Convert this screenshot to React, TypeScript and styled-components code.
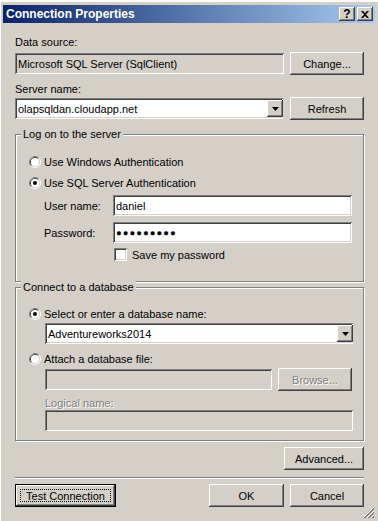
import styled, { createGlobalStyle } from 'styled-components';

const Global = createGlobalStyle`
  html, body {
    margin: 0;
    padding: 0;
    background: #d4d0c8;
  }
`;

const raised = `
  box-shadow: inset -1px -1px 0 #404040, inset 1px 1px 0 #fff,
    inset -2px -2px 0 #808080, inset 2px 2px 0 #d4d0c8;
`;

const sunken = `
  box-shadow: inset 1px 1px 0 #808080, inset -1px -1px 0 #fff,
    inset 2px 2px 0 #404040, inset -2px -2px 0 #d4d0c8;
`;

const Radio = ({ checked }: { checked?: boolean }) => (
  <RadioImage viewBox="0 0 12 12">
    <path d="M2.11 9.89A5.5 5.5 0 0 1 9.89 2.11" stroke="#808080" fill="none" />
    <path d="M9.89 2.11A5.5 5.5 0 0 1 2.11 9.89" stroke="#fff" fill="none" />
    <path d="M2.82 9.18A4.5 4.5 0 0 1 9.18 2.82" stroke="#404040" fill="none" />
    <path d="M9.18 2.82A4.5 4.5 0 0 1 2.82 9.18" stroke="#d4d0c8" fill="none" />
    <circle cx="6" cy="6" r="4" fill="#fff" />
    {checked && <circle cx="6" cy="6" r="2" fill="#000" />}
  </RadioImage>
);

const DropArrow = () => (
  <ArrowButton>
    <svg width="7" height="4" viewBox="0 0 7 4">
      <polygon points="0,0 7,0 3.5,4" fill="#000" />
    </svg>
  </ArrowButton>
);

const App = (): JSX.Element => {
  return (
    <Window>
      <Global />
      <TitleBar>
        <Title>Connection Properties</Title>
        <CaptionButton>?</CaptionButton>
        <CaptionButton $gap>
          <svg width="8" height="7" viewBox="0 0 8 7">
            <path d="M0 0h2l2 2 2-2h2L5 3.5 8 7H6L4 5 2 7H0l3-3.5z" fill="#000" />
          </svg>
        </CaptionButton>
      </TitleBar>

      <Content>
        <Label $top={13}>Data source:</Label>
        <Row $top={3}>
          <Field $grey $width={269}>Microsoft SQL Server (SqlClient)</Field>
          <Button $width={74}>Change...</Button>
        </Row>

        <Label $top={8}>Server name:</Label>
        <Row $top={1}>
          <Field $width={268}>
            <FieldText>olapsqldan.cloudapp.net</FieldText>
            <DropArrow />
          </Field>
          <Button $width={74}>Refresh</Button>
        </Row>

        <Group $top={14} $bottom={20}>
          <Legend>Log on to the server</Legend>
          <Choice $top={14}>
            <Radio />
            Use Windows Authentication
          </Choice>
          <Choice $top={8}>
            <Radio checked />
            Use SQL Server Authentication
          </Choice>
          <LoginRow $top={6}>
            <LoginLabel>User name:</LoginLabel>
            <Field $grow>daniel</Field>
          </LoginRow>
          <LoginRow $top={6}>
            <LoginLabel>Password:</LoginLabel>
            <Field $grow>
              <Dots>●●●●●●●●●</Dots>
            </Field>
          </LoginRow>
          <CheckRow>
            <CheckBox />
            Save my password
          </CheckRow>
        </Group>

        <Group $top={5} $bottom={9}>
          <Legend>Connect to a database</Legend>
          <Choice $top={13}>
            <Radio checked />
            Select or enter a database name:
          </Choice>
          <Indent>
            <Field $top={3} $width={308}>
              <FieldText>Adventureworks2014</FieldText>
              <DropArrow />
            </Field>
          </Indent>
          <Choice $top={8}>
            <Radio />
            Attach a database file:
          </Choice>
          <Indent>
            <Row $top={3}>
              <Field $grey $width={227} />
              <Button $width={74} $disabled>Browse...</Button>
            </Row>
            <Label $top={6} $disabled>Logical name:</Label>
            <Field $grey $width={308} />
          </Indent>
        </Group>

        <Button $width={80} $top={6} $right>
          Advanced...
        </Button>
        <Separator />

        <Footer>
          <DefaultButton>
            <FocusRect>Test Connection</FocusRect>
          </DefaultButton>
          <Spacer />
          <Button $width={75}>OK</Button>
          <Button $width={74}>Cancel</Button>
        </Footer>
      </Content>

      <Grip width="13" height="13" viewBox="0 0 13 13">
        <path d="M12 1L1 12M12 5L5 12M12 9L9 12" stroke="#fff" />
        <path d="M12 2L2 12M12 3L3 12M12 6L6 12M12 7L7 12M12 10L10 12M12 11L11 12" stroke="#808080" />
      </Grip>
    </Window>
  );
};

export default App;

const Window = styled.div`
  position: relative;
  box-sizing: border-box;
  width: 378px;
  height: 521px;
  overflow: hidden;
  background: #d4d0c8;
  border-top: 2px solid #fff;
  border-left: 1px solid #fff;
  padding: 3px 3px 0 2px;
  display: flex;
  flex-direction: column;
  font-family: 'Liberation Sans', Arial, sans-serif;
  font-size: 11px;
  color: #000;
`;

const TitleBar = styled.div`
  display: flex;
  align-items: center;
  height: 18px;
  padding: 0 2px 0 3px;
  background: linear-gradient(to right, #0a246a, #a6caf0);
`;

const Title = styled.div`
  flex: 1;
  color: #fff;
  font-weight: bold;
  font-size: 12px;
`;

const CaptionButton = styled.div<{ $gap?: boolean }>`
  display: flex;
  align-items: center;
  justify-content: center;
  width: 16px;
  height: 14px;
  margin-left: ${(p) => (p.$gap ? '2px' : '0')};
  background: #d4d0c8;
  font-weight: bold;
  font-size: 12px;
  line-height: 14px;
  ${raised}
`;

const Content = styled.div`
  display: flex;
  flex-direction: column;
  padding: 0 11px 0 12px;
`;

const Label = styled.div<{ $top?: number; $disabled?: boolean }>`
  height: 13px;
  line-height: 13px;
  margin-top: ${(p) => p.$top ?? 0}px;
  color: ${(p) => (p.$disabled ? '#808080' : '#000')};
  text-shadow: ${(p) => (p.$disabled ? '1px 1px 0 #fff' : 'none')};
`;

const Row = styled.div<{ $top?: number }>`
  display: flex;
  align-items: center;
  justify-content: space-between;
  height: 23px;
  margin-top: ${(p) => p.$top ?? 0}px;
`;

const Field = styled.div<{ $grey?: boolean; $width?: number; $grow?: boolean; $top?: number }>`
  box-sizing: border-box;
  display: flex;
  align-items: center;
  height: 21px;
  width: ${(p) => (p.$width ? `${p.$width}px` : 'auto')};
  flex: ${(p) => (p.$grow ? '1' : 'none')};
  margin-top: ${(p) => p.$top ?? 0}px;
  padding: 2px 2px 2px 3px;
  background: ${(p) => (p.$grey ? '#d4d0c8' : '#fff')};
  white-space: nowrap;
  ${sunken}
`;

const FieldText = styled.span`
  flex: 1;
`;

const ArrowButton = styled.div`
  display: flex;
  align-items: center;
  justify-content: center;
  width: 16px;
  height: 17px;
  margin-right: -2px;
  background: #d4d0c8;
  ${raised}
`;

const Button = styled.div<{ $width: number; $top?: number; $right?: boolean; $disabled?: boolean }>`
  box-sizing: border-box;
  display: flex;
  align-items: center;
  justify-content: center;
  width: ${(p) => p.$width}px;
  height: 23px;
  margin-top: ${(p) => p.$top ?? 0}px;
  align-self: ${(p) => (p.$right ? 'flex-end' : 'auto')};
  background: #d4d0c8;
  color: ${(p) => (p.$disabled ? '#808080' : '#000')};
  text-shadow: ${(p) => (p.$disabled ? '1px 1px 0 #fff' : 'none')};
  ${raised}
`;

const Group = styled.div<{ $top: number; $bottom: number }>`
  display: flex;
  flex-direction: column;
  margin-top: ${(p) => p.$top}px;
  padding: 0 11px ${(p) => p.$bottom}px 13px;
  border: 1px solid #808080;
  box-shadow: inset 1px 1px 0 #fff, 1px 1px 0 #fff;
`;

const Legend = styled.div`
  align-self: flex-start;
  height: 13px;
  line-height: 13px;
  margin: -7px 0 0 -8px;
  padding: 0 2px;
  background: #d4d0c8;
`;

const Choice = styled.div<{ $top: number }>`
  display: flex;
  align-items: center;
  gap: 3px;
  height: 13px;
  margin-top: ${(p) => p.$top}px;
`;

const RadioImage = styled.svg`
  width: 12px;
  height: 12px;
  flex-shrink: 0;
`;

const LoginRow = styled.div<{ $top: number }>`
  display: flex;
  align-items: center;
  margin-top: ${(p) => p.$top}px;
  padding-left: 15px;
`;

const LoginLabel = styled.div`
  width: 69px;
`;

const Dots = styled.span`
  font-size: 9.5px;
  letter-spacing: 1px;
`;

const CheckRow = styled.div`
  display: flex;
  align-items: center;
  gap: 5px;
  height: 13px;
  margin-top: 5px;
  padding-left: 85px;
`;

const CheckBox = styled.div`
  width: 13px;
  height: 13px;
  box-sizing: border-box;
  background: #fff;
  ${sunken}
`;

const Indent = styled.div`
  display: flex;
  flex-direction: column;
  padding-left: 16px;
`;

const Separator = styled.div`
  height: 1px;
  margin-top: 7px;
  background: #808080;
  border-bottom: 1px solid #fff;
`;

const Footer = styled.div`
  display: flex;
  align-items: center;
  gap: 6px;
  margin-top: 5px;
`;

const Spacer = styled.div`
  flex: 1;
`;

const DefaultButton = styled.div`
  box-sizing: border-box;
  width: 101px;
  height: 23px;
  padding: 4px;
  background: #d4d0c8;
  border: 1px solid #000;
  box-shadow: inset -1px -1px 0 #404040, inset 1px 1px 0 #fff,
    inset -2px -2px 0 #808080;
`;

const FocusRect = styled.div`
  box-sizing: border-box;
  display: flex;
  align-items: center;
  justify-content: center;
  height: 100%;
  border: 1px dotted #000;
`;

const Grip = styled.svg`
  position: absolute;
  right: 3px;
  bottom: 2px;
`;
